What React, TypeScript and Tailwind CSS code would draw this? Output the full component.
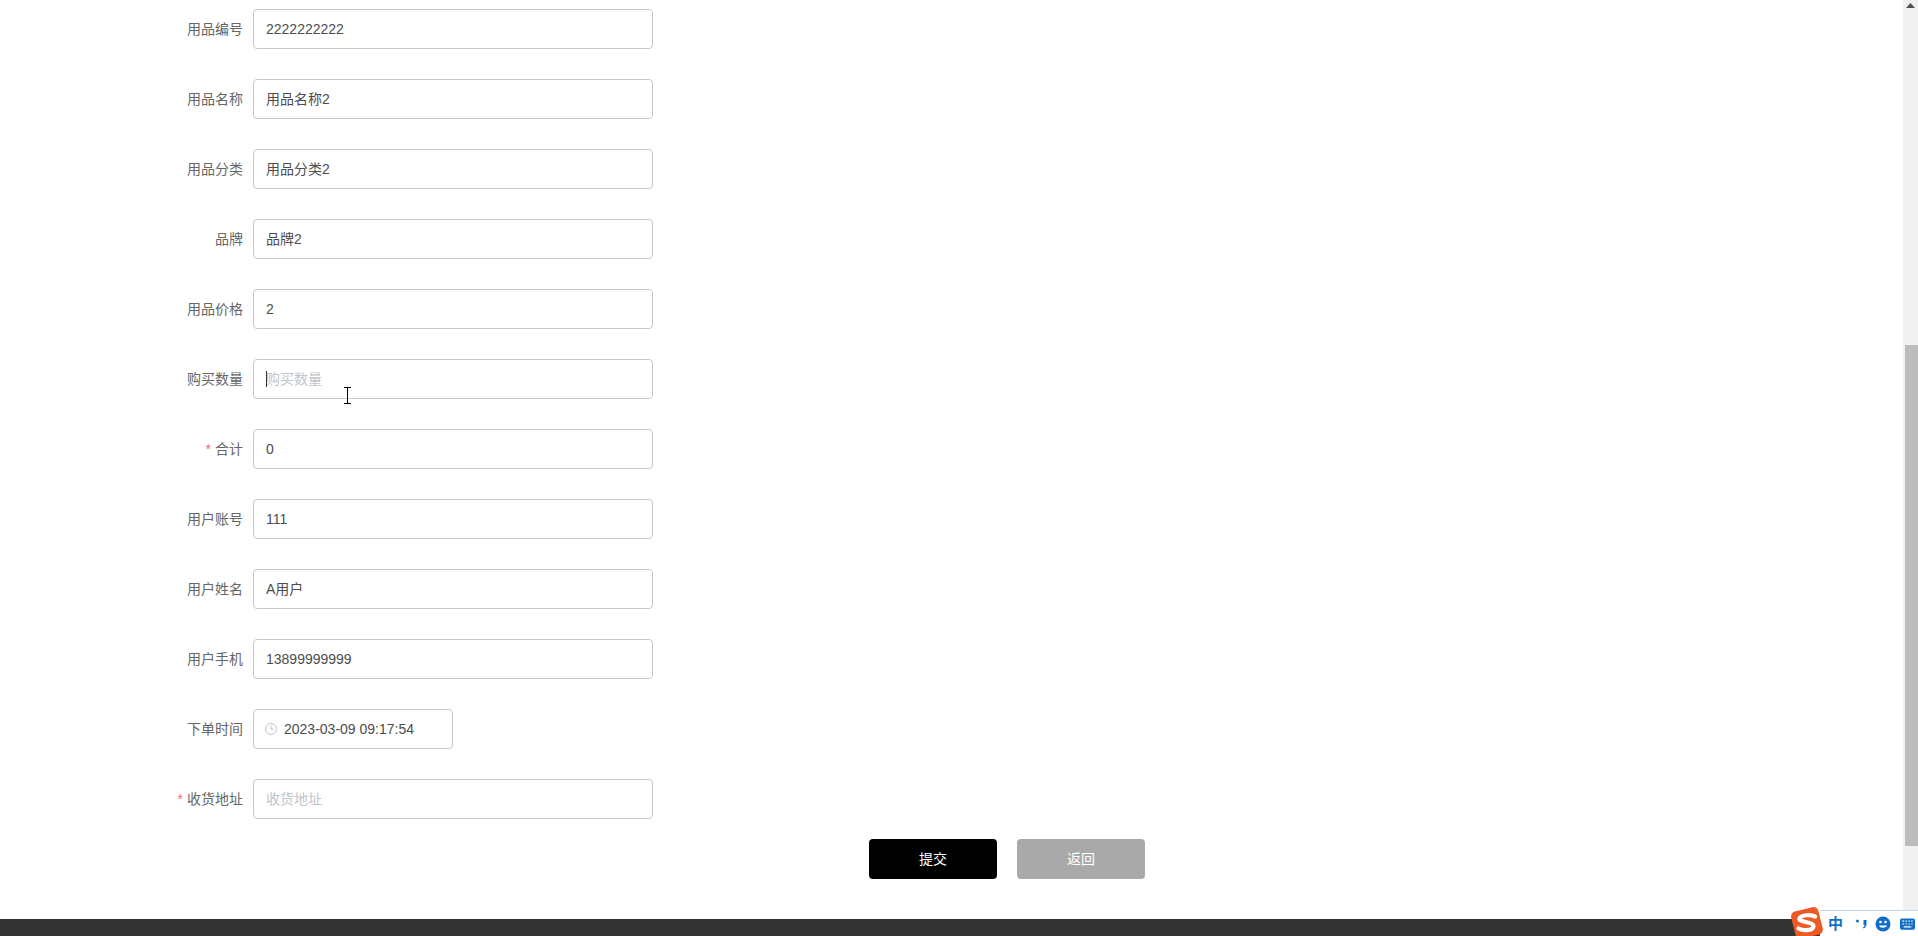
const rows = [
  { label: "用品编号", value: "2222222222" },
  { label: "用品名称", value: "用品名称2" },
  { label: "用品分类", value: "用品分类2" },
  { label: "品牌", value: "品牌2" },
  { label: "用品价格", value: "2" },
  { label: "购买数量", placeholder: "购买数量", focused: true },
  { label: "合计", value: "0", required: true },
  { label: "用户账号", value: "111" },
  { label: "用户姓名", value: "A用户" },
  { label: "用户手机", value: "13899999999" },
  { label: "下单时间", value: "2023-03-09 09:17:54", date: true },
  { label: "收货地址", placeholder: "收货地址", required: true },
];

function ClockIcon() {
  return (
    <svg width="14" height="14" viewBox="0 0 14 14" fill="none" stroke="#c0c4cc" strokeWidth="1" className="shrink-0">
      <circle cx="7" cy="7" r="5.5" />
      <path d="M7 3.5V7.2H10" />
    </svg>
  );
}

function Field({ row }: { row: (typeof rows)[number] }) {
  return (
    <div className="flex h-10 items-center">
      <label className="w-[253px] shrink-0 pr-[10px] text-right text-[14px] text-[#666666]">
        {row.required && <span className="mr-1 text-[#f56c6c]">*</span>}
        {row.label}
      </label>
      {row.date ? (
        <div className="flex h-10 w-[200px] items-center rounded border border-[#c8c8c8] bg-white pl-[10px] text-[14px] text-[#4d4d4d]">
          <ClockIcon />
          <span className="ml-[6px]">{row.value}</span>
        </div>
      ) : (
        <div className="relative flex h-10 w-[400px] items-center rounded border border-[#c8c8c8] bg-white px-3 text-[14px] text-[#4d4d4d]">
          {row.focused && <span className="absolute left-3 top-[11px] h-4 w-px bg-[#333]" />}
          {row.value ?? <span className="text-[#c0c4cc]">{row.placeholder}</span>}
        </div>
      )}
    </div>
  );
}

function SogouBar() {
  return (
    <div className="absolute bottom-0 right-0 h-[30px] w-[128px]">
      <div className="absolute bottom-0 right-0 flex h-[26px] w-[98px] items-center border-t border-[#c9d6e6] bg-white pl-[8px]">
        <span className="text-[15px] font-bold leading-none text-[#0f6fc6]">中</span>
        <svg width="13" height="12" viewBox="0 0 13 12" className="ml-[12px]" fill="#0f6fc6">
          <circle cx="2.5" cy="3" r="1.5" />
          <path d="M8.5 2h3v3.5C11.5 8 10.5 9.5 8.5 10.5L8 9.2C9 8.6 9.6 7.8 9.7 7H8.5Z" />
        </svg>
        <svg width="16" height="16" viewBox="0 0 16 16" className="ml-[7px]">
          <circle cx="8" cy="8" r="7.5" fill="#0f6fc6" />
          <circle cx="5.5" cy="6" r="1.3" fill="#fff" />
          <circle cx="10.5" cy="6" r="1.3" fill="#fff" />
          <path d="M4 9.5C5 12.5 11 12.5 12 9.5Z" fill="#fff" />
        </svg>
        <svg width="15" height="12" viewBox="0 0 16 12" className="ml-[9px]">
          <rect x="0" y="0" width="16" height="12" rx="2" fill="#0f6fc6" />
          <path d="M2.5 3h2M6 3h1.5M9 3h1.5M12 3h1.5M2.5 6h2M6 6h1.5M9 6h1.5M12 6h1.5M4 9h8" stroke="#fff" strokeWidth="1.3" />
        </svg>
      </div>
      <svg width="34" height="32" viewBox="0 0 34 32" className="absolute left-0 top-0">
        <rect x="3" y="3" width="28" height="28" rx="5" fill="#ee5a24" transform="rotate(-14 17 17)" />
        <path
          d="M25 10.5C21 8.5 11 8.5 9.5 12.5C8.5 16.5 24 15.5 23.5 20.5C22.5 25 12.5 25 8.5 22.5"
          fill="none"
          stroke="#fff"
          strokeWidth="4.2"
          strokeLinecap="round"
        />
      </svg>
    </div>
  );
}

export default function App() {
  return (
    <div className="relative flex h-[936px] overflow-hidden bg-white font-['Liberation_Sans','Noto_Sans_CJK_SC',sans-serif]">
      <div className="flex min-w-0 flex-1 flex-col">
        <div className="flex-1 pt-[9px]">
          <div className="flex flex-col gap-[30px]">
            {rows.map((row) => (
              <Field key={row.label} row={row} />
            ))}
          </div>
          <div className="ml-[869px] mt-5 flex gap-5">
            <button className="h-10 w-32 rounded bg-black text-[14px] text-white">提交</button>
            <button className="h-10 w-32 rounded bg-[#a9a9a9] text-[14px] text-white">返回</button>
          </div>
        </div>
        <div className="h-[17px] bg-[#333333]" />
      </div>

      {/* 滚动条 */}
      <div className="relative flex w-[15px] shrink-0 flex-col bg-[#f1f1f1]">
        <svg width="9" height="5" viewBox="0 0 9 5" className="absolute left-[3px] top-[3px]" fill="#505050">
          <path d="M4.5 0L9 5H0Z" />
        </svg>
        <div className="h-[345px]" />
        <div className="ml-[2px] h-[501px] bg-[#bcbcbc]" />
      </div>

      {/* 鼠标光标 */}
      <svg width="9" height="17" viewBox="0 0 9 17" className="absolute left-[343px] top-[387px]" fill="none" stroke="#000">
        <path d="M1 .5H8M1 16.5H8M4.5 .5V16.5" />
      </svg>

      <SogouBar />
    </div>
  );
}
